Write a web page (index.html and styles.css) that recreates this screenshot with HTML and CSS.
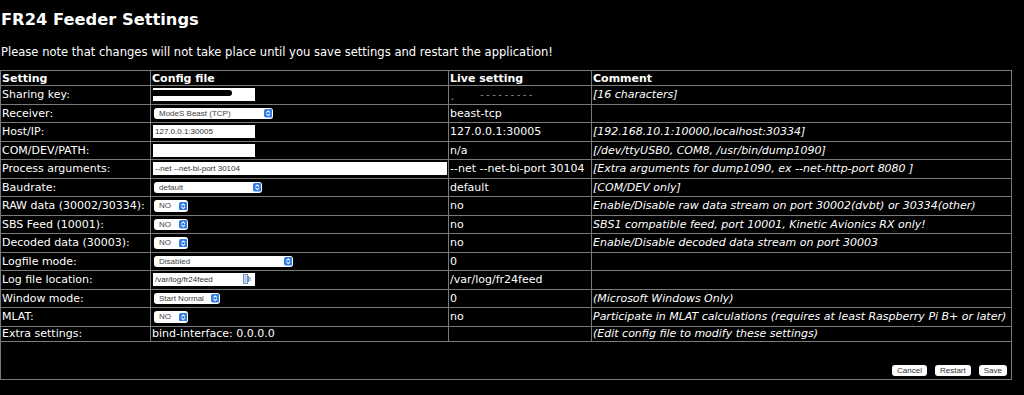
FILE: index.html
```html
<!DOCTYPE html>
<html>
<head>
<meta charset="utf-8">
<title>FR24 Feeder Settings</title>
<link rel="stylesheet" href="styles.css">
</head>
<body>
<h1 class="title">FR24 Feeder Settings</h1>
<p class="note">Please note that changes will not take place until you save settings and restart the application!</p>
<table class="settings">
  <colgroup>
    <col class="c1"><col class="c2"><col class="c3"><col class="c4">
  </colgroup>
  <tr class="head">
    <th>Setting</th><th>Config file</th><th>Live setting</th><th>Comment</th>
  </tr>
  <tr class="ctl">
    <td>Sharing key:</td>
    <td><span class="input short"><span class="redact"></span></span></td>
    <td><span class="blur">&#184;&nbsp;&nbsp;&nbsp;&nbsp;&nbsp;&nbsp;&nbsp;&nbsp;&nbsp;- - - - - - - - -</span></td>
    <td class="cm">[16 characters]</td>
  </tr>
  <tr class="ctl">
    <td>Receiver:</td>
    <td><span class="select w-recv">ModeS Beast (TCP)<svg class="arrows" viewBox="0 0 9 9"><rect width="9" height="9" rx="2" fill="#2f7be8"/><path d="M2.6 3.8 4.5 2 6.4 3.8M2.6 5.2 4.5 7 6.4 5.2" fill="none" stroke="#fff" stroke-width="1.1"/></svg></span></td>
    <td>beast-tcp</td>
    <td class="cm"></td>
  </tr>
  <tr class="ctl">
    <td>Host/IP:</td>
    <td><span class="input short">127.0.0.1:30005</span></td>
    <td>127.0.0.1:30005</td>
    <td class="cm">[192.168.10.1:10000,localhost:30334]</td>
  </tr>
  <tr class="ctl">
    <td>COM/DEV/PATH:</td>
    <td><span class="input short"></span></td>
    <td>n/a</td>
    <td class="cm">[/dev/ttyUSB0, COM8, /usr/bin/dump1090]</td>
  </tr>
  <tr class="ctl">
    <td>Process arguments:</td>
    <td><span class="input long">--net --net-bi-port 30104</span></td>
    <td>--net --net-bi-port 30104</td>
    <td class="cm">[Extra arguments for dump1090, ex --net-http-port 8080 ]</td>
  </tr>
  <tr class="ctl">
    <td>Baudrate:</td>
    <td><span class="select w-baud">default<svg class="arrows" viewBox="0 0 9 9"><rect width="9" height="9" rx="2" fill="#2f7be8"/><path d="M2.6 3.8 4.5 2 6.4 3.8M2.6 5.2 4.5 7 6.4 5.2" fill="none" stroke="#fff" stroke-width="1.1"/></svg></span></td>
    <td>default</td>
    <td class="cm">[COM/DEV only]</td>
  </tr>
  <tr class="ctl">
    <td>RAW data (30002/30334):</td>
    <td><span class="select w-no">NO<svg class="arrows" viewBox="0 0 9 9"><rect width="9" height="9" rx="2" fill="#2f7be8"/><path d="M2.6 3.8 4.5 2 6.4 3.8M2.6 5.2 4.5 7 6.4 5.2" fill="none" stroke="#fff" stroke-width="1.1"/></svg></span></td>
    <td>no</td>
    <td class="cm">Enable/Disable raw data stream on port 30002(dvbt) or 30334(other)</td>
  </tr>
  <tr class="ctl">
    <td>SBS Feed (10001):</td>
    <td><span class="select w-no">NO<svg class="arrows" viewBox="0 0 9 9"><rect width="9" height="9" rx="2" fill="#2f7be8"/><path d="M2.6 3.8 4.5 2 6.4 3.8M2.6 5.2 4.5 7 6.4 5.2" fill="none" stroke="#fff" stroke-width="1.1"/></svg></span></td>
    <td>no</td>
    <td class="cm">SBS1 compatible feed, port 10001, Kinetic Avionics RX only!</td>
  </tr>
  <tr class="ctl">
    <td>Decoded data (30003):</td>
    <td><span class="select w-no">NO<svg class="arrows" viewBox="0 0 9 9"><rect width="9" height="9" rx="2" fill="#2f7be8"/><path d="M2.6 3.8 4.5 2 6.4 3.8M2.6 5.2 4.5 7 6.4 5.2" fill="none" stroke="#fff" stroke-width="1.1"/></svg></span></td>
    <td>no</td>
    <td class="cm">Enable/Disable decoded data stream on port 30003</td>
  </tr>
  <tr class="ctl">
    <td>Logfile mode:</td>
    <td><span class="select w-log">Disabled<svg class="arrows" viewBox="0 0 9 9"><rect width="9" height="9" rx="2" fill="#2f7be8"/><path d="M2.6 3.8 4.5 2 6.4 3.8M2.6 5.2 4.5 7 6.4 5.2" fill="none" stroke="#fff" stroke-width="1.1"/></svg></span></td>
    <td>0</td>
    <td class="cm"></td>
  </tr>
  <tr class="ctl">
    <td>Log file location:</td>
    <td><span class="input short">/var/log/fr24feed<svg class="keyicon" viewBox="0 0 8 10"><rect x="0.5" y="0.5" width="4" height="9" fill="#fff" stroke="#6a8fb8"/><rect x="1.5" y="1.5" width="2" height="7" fill="#9cc0e6"/><path d="M5.5 2v6M7 3v4" stroke="#6a8fb8" stroke-width="1"/></svg></span></td>
    <td>/var/log/fr24feed</td>
    <td class="cm"></td>
  </tr>
  <tr class="ctl">
    <td>Window mode:</td>
    <td><span class="select w-win">Start Normal<svg class="arrows" viewBox="0 0 9 9"><rect width="9" height="9" rx="2" fill="#2f7be8"/><path d="M2.6 3.8 4.5 2 6.4 3.8M2.6 5.2 4.5 7 6.4 5.2" fill="none" stroke="#fff" stroke-width="1.1"/></svg></span></td>
    <td>0</td>
    <td class="cm">(Microsoft Windows Only)</td>
  </tr>
  <tr class="ctl">
    <td>MLAT:</td>
    <td><span class="select w-no">NO<svg class="arrows" viewBox="0 0 9 9"><rect width="9" height="9" rx="2" fill="#2f7be8"/><path d="M2.6 3.8 4.5 2 6.4 3.8M2.6 5.2 4.5 7 6.4 5.2" fill="none" stroke="#fff" stroke-width="1.1"/></svg></span></td>
    <td>no</td>
    <td class="cm">Participate in MLAT calculations (requires at least Raspberry Pi B+ or later)</td>
  </tr>
  <tr class="plain">
    <td>Extra settings:</td>
    <td>bind-interface: 0.0.0.0</td>
    <td></td>
    <td class="cm">(Edit config file to modify these settings)</td>
  </tr>
  <tr class="actions">
    <td colspan="4">
      <div class="buttons">
        <button class="btn">Cancel</button>
        <button class="btn">Restart</button>
        <button class="btn">Save</button>
      </div>
    </td>
  </tr>
</table>
</body>
</html>
```

FILE: styles.css
```css
html, body {
  margin: 0;
  padding: 0;
  background: #000;
  color: #fff;
  font-family: "DejaVu Sans", Verdana, sans-serif;
}

body {
  padding-left: 1px;
}

.title {
  font-size: 16.3px;
  line-height: 20px;
  font-weight: bold;
  margin: 10px 0 0 0;
}

.note {
  font-size: 11.55px;
  line-height: 14px;
  margin: 15px 0 0 0;
}

.settings {
  margin-top: 11px;
  margin-left: -1px;
  width: 1011px;
  table-layout: fixed;
  border-collapse: collapse;
  font-size: 11px;
}

.c1 { width: 150px; }
.c2 { width: 298px; }
.c3 { width: 143px; }
.c4 { width: 420px; }

.settings th,
.settings td {
  border: 1px solid #7a7a7a;
  padding: 0 1px;
  text-align: left;
  vertical-align: middle;
  white-space: nowrap;
  overflow: hidden;
  line-height: 13px;
}

.settings th {
  font-weight: bold;
  height: 14px;
}

.ctl td {
  height: 17.5px;
}

.plain td {
  height: 14px;
}

.cm {
  font-style: italic;
}

.input {
  position: relative;
  display: flex;
  align-items: center;
  box-sizing: border-box;
  height: 13px;
  background: #fff;
  color: #333;
  font-family: "Liberation Sans", Arial, sans-serif;
  font-size: 8px;
  padding-left: 2px;
  margin-left: 1px;
}

.input.short { width: 102px; }
.input.long { width: 294px; }

.redact {
  position: absolute;
  left: 0;
  top: 2px;
  width: 79px;
  height: 6px;
  background: #000;
  border-radius: 0 4px 4px 0;
}

.keyicon {
  position: absolute;
  right: 4px;
  top: 1px;
  width: 8px;
  height: 10px;
}

.select {
  display: flex;
  align-items: center;
  justify-content: space-between;
  box-sizing: border-box;
  height: 11.5px;
  background: #fff;
  color: #444;
  border-radius: 3px;
  font-family: "Liberation Sans", Arial, sans-serif;
  font-size: 8px;
  padding: 0 1px 0 5px;
  margin-left: 2px;
}

.arrows {
  width: 8.5px;
  height: 8.5px;
  flex: none;
}

.w-recv { width: 119px; }
.w-baud { width: 108px; }
.w-no { width: 34px; }
.w-log { width: 139px; }
.w-win { width: 66px; }

.blur {
  color: #aaa;
  font-size: 9px;
}

.actions td {
  height: 34px;
  vertical-align: bottom;
  padding: 0 4px 3px 0;
}

.buttons {
  display: flex;
  justify-content: flex-end;
  gap: 8px;
}

.btn {
  background: #fff;
  color: #333;
  border: none;
  border-radius: 3px;
  font-family: "Liberation Sans", Arial, sans-serif;
  font-size: 8px;
  height: 11px;
  line-height: 11px;
  padding: 0 5px;
}
```
